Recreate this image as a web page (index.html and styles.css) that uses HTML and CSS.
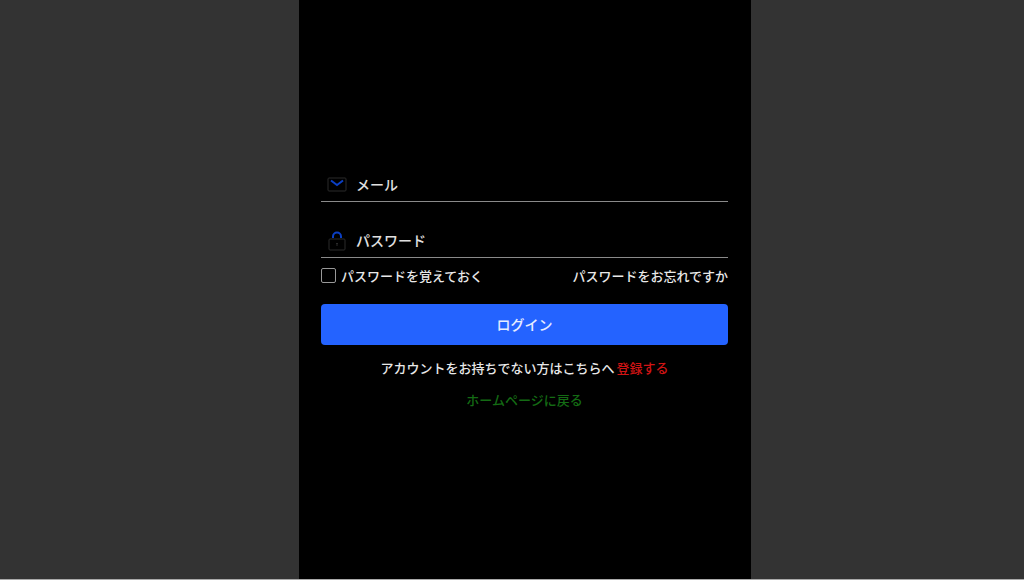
FILE: index.html
```html
<!DOCTYPE html>
<html lang="ja">
<head>
<meta charset="utf-8">
<meta name="viewport" content="width=device-width, initial-scale=1">
<title>ログイン</title>
<link rel="stylesheet" href="styles.css">
</head>
<body>
<main class="panel">
  <form class="login">
    <div class="field">
      <svg class="icon" viewBox="0 0 20 20" aria-hidden="true">
        <rect class="icon-body" x="1" y="4" width="18" height="13" rx="1"/>
        <path class="icon-accent" d="M4 6.500 10 11l6-4.500"/>
      </svg>
      <input class="field-input" type="email" placeholder="メール" aria-label="メール">
    </div>
    <div class="field">
      <svg class="icon" viewBox="0 0 20 20" aria-hidden="true">
        <rect class="icon-body" x="2" y="9" width="16" height="11" rx="1"/>
        <path class="icon-body" d="M10 13v3M9 13.500h2"/>
        <path class="icon-accent" d="M6 8V6.500a4 4 0 0 1 8 0V8"/>
      </svg>
      <input class="field-input" type="password" placeholder="パスワード" aria-label="パスワード">
    </div>
    <div class="options">
      <label class="remember"><input class="check" type="checkbox">パスワードを覚えておく</label>
      <a class="forgot" href="#">パスワードをお忘れですか</a>
    </div>
    <button class="submit" type="submit">ログイン</button>
    <p class="signup">アカウントをお持ちでない方はこちらへ<a class="signup-link" href="#">登録する</a></p>
    <a class="home" href="#">ホームページに戻る</a>
  </form>
</main>
</body>
</html>
```
FILE: styles.css
```css
* { box-sizing: border-box; }

body {
  margin: 0;
  min-height: 100vh;
  padding-left: 26px;
  display: flex;
  justify-content: center;
  background: #333;
  border-bottom: 1px solid #aaa;
  color: #e8e8e8;
  font: 500 13px/20px "Noto Sans CJK JP", sans-serif;
}

.panel {
  width: 100%;
  max-width: 452px;
  padding: 0 23px 2px 22px;
  display: flex;
  align-items: center;
  background: #000;
}

.login {
  width: 100%;
  display: flex;
  flex-direction: column;
}

.field {
  display: flex;
  align-items: center;
  gap: 9px;
  height: 34px;
  margin-bottom: 22px;
  padding-left: 6px;
  border-bottom: 1px solid #8a8a8a;
}

.field + .field { margin-bottom: 8px; }

.icon { width: 20px; height: 20px; flex: none; fill: none; overflow: visible; }
.icon-body { stroke: #2a2a2a; }
.icon-accent { stroke: #0b3fc4; stroke-width: 2; }

.field-input {
  flex: 1;
  min-width: 0;
  padding: 0;
  border: 0;
  outline: 0;
  background: transparent;
  color: #e0e0e0;
  font: inherit;
  font-size: 14px;
}
.field-input::placeholder { color: #e0e0e0; opacity: 1; }

.options {
  display: flex;
  justify-content: space-between;
  align-items: center;
  gap: 8px;
  margin-bottom: 18px;
}
.remember { display: flex; align-items: center; gap: 5px; }

.check {
  appearance: none;
  width: 15px;
  height: 15px;
  margin: 0;
  border: 1px solid #999;
  border-radius: 2px;
}
.check:checked { background: #2463ff; }

a { color: inherit; text-decoration: none; }

.submit {
  height: 41px;
  margin-bottom: 13px;
  padding: 0;
  border: 0;
  border-radius: 4px;
  background: #2463ff;
  color: #e6ecff;
  font: inherit;
  font-size: 14px;
}

.signup { margin: 0 0 12px; text-align: center; }
.signup-link { margin-left: 2px; color: #d01414; }
.home { align-self: center; color: #146b14; }
```
